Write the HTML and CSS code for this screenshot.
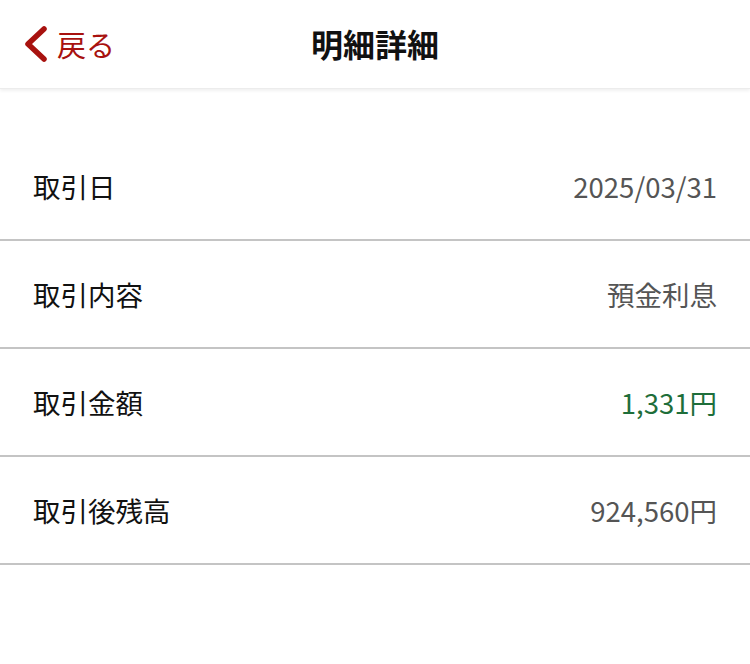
FILE: index.html
```html
<!DOCTYPE html>
<html lang="ja">
<head>
<meta charset="utf-8">
<title>明細詳細</title>
<link rel="stylesheet" href="styles.css">
</head>
<body>
<header class="header">
  <a class="back" href="#">
    <svg class="back-icon" width="28" height="38" viewBox="0 0 28 38" aria-hidden="true">
      <path d="M23 4 L7 19 L23 34" fill="none" stroke="#a8120f" stroke-width="5.5" stroke-linecap="round" stroke-linejoin="round"/>
    </svg>
    <span class="back-text">戻る</span>
  </a>
  <h1 class="title">明細詳細</h1>
</header>
<main class="list">
  <div class="row"><span class="label">取引日</span><span class="value">2025/03/31</span></div>
  <div class="row"><span class="label">取引内容</span><span class="value">預金利息</span></div>
  <div class="row"><span class="label">取引金額</span><span class="value value-green">1,331円</span></div>
  <div class="row"><span class="label">取引後残高</span><span class="value">924,560円</span></div>
</main>
</body>
</html>
```
FILE: styles.css
```css
* { box-sizing: border-box; }
html, body {
  margin: 0;
  padding: 0;
  background: #fff;
  font-family: "Noto Sans CJK JP", "Noto Sans", sans-serif;
}
.header {
  position: relative;
  height: 89px;
  display: flex;
  align-items: center;
  justify-content: center;
  border-bottom: 1px solid #ececec;
  box-shadow: 0 2px 3px rgba(0, 0, 0, 0.06);
}
.back {
  position: absolute;
  left: 21px;
  top: 25px;
  display: flex;
  align-items: center;
  gap: 8px;
  text-decoration: none;
  color: #a8120f;
}
.back-icon { display: block; }
.back-text {
  font-size: 29px;
  line-height: 38px;
}
.title {
  margin: 0;
  font-size: 32px;
  font-weight: 700;
  color: #111;
  line-height: 1;
  position: relative;
  top: -1px;
}
.list {
  margin-top: 44px;
}
.row {
  height: 108px;
  display: flex;
  align-items: center;
  justify-content: space-between;
  padding: 0 33px;
  border-bottom: 2px solid #c4c4c4;
}
.label {
  font-size: 27.5px;
  color: #111;
}
.value {
  font-size: 27.5px;
  color: #555;
}
.value-green { color: #1e6e3a; }
```
